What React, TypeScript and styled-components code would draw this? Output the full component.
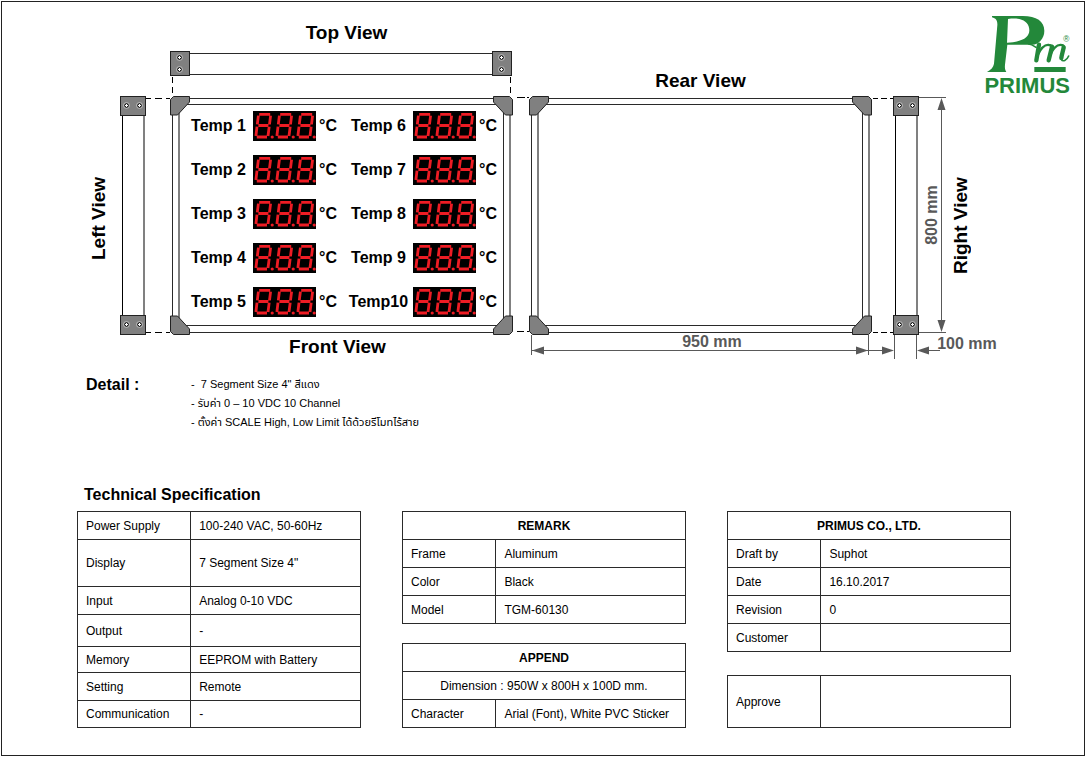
import React from "react";
import styled, { createGlobalStyle } from "styled-components";

const INK = "#000";
const LINE = "#2a2a2a";
const DIM = "#595959";
const METAL = "#808080";
const GREEN = "#23883a";

const GlobalStyle = createGlobalStyle`
  *, *::before, *::after { box-sizing: border-box; }
  body {
    margin: 0;
    background: #fff;
    color: ${INK};
    font-family: "Liberation Sans", "Noto Sans", "Noto Sans Thai", sans-serif;
  }
`;

const Sheet = styled.main`
  margin: 1px;
  border: 1px solid #222;
  padding-bottom: 27px;
`;

/* ---------- Drawing ---------- */

const Drawing = styled.section`
  display: grid;
  grid-template-columns: 26px 58px 343px 16px 343px 76px 30px minmax(94px, 1fr);
  grid-template-rows: 94px 239px 25px;
  padding: 0 14px 0 84px;
`;

const Area = styled.div<{ $col: string; $row: number }>`
  grid-column: ${(p) => p.$col};
  grid-row: ${(p) => p.$row};
  svg { display: block; overflow: visible; }
`;

const TopArea = styled(Area)`
  display: flex;
  flex-direction: column;
  justify-content: flex-end;
`;

const ViewTitle = styled.h2<{ $shift?: number }>`
  margin: 0;
  padding-left: ${(p) => Math.max(p.$shift ?? 0, 0)}px;
  padding-right: ${(p) => Math.max(-(p.$shift ?? 0), 0)}px;
  font-size: 19px;
  line-height: 24px;
  font-weight: 700;
  text-align: center;
`;

const TopTitle = styled(ViewTitle)`
  margin-bottom: 6px;
`;

const RearTitle = styled(ViewTitle)`
  margin-bottom: 3px;
`;

const SideTitle = styled.h2<{ $drop: number }>`
  margin: 0;
  height: 100%;
  padding-bottom: ${(p) => p.$drop}px;
  writing-mode: vertical-rl;
  transform: rotate(180deg);
  font-size: 19px;
  line-height: 26px;
  font-weight: 700;
  text-align: center;
`;

const Panel = styled.div`
  position: relative;
  height: 100%;
`;

const FrameLayer = styled.svg`
  position: absolute;
  inset: 0;
`;

const Readings = styled.ul`
  position: relative;
  display: grid;
  grid-template-columns: 150px 150px;
  grid-template-rows: repeat(5, 30px);
  grid-auto-flow: column;
  gap: 14px 10px;
  margin: 0;
  padding: 15px 0 0 17px;
  list-style: none;
`;

const Reading = styled.li`
  display: grid;
  grid-template-columns: 63px 63px 18px;
  column-gap: 3px;
  align-items: center;
  font-size: 16px;
  line-height: 20px;
  font-weight: 700;
  white-space: nowrap;
`;

const ReadingLabel = styled.span`
  text-align: center;
`;

const Logo = styled(TopArea)`
  align-items: flex-end;
  padding-right: 2px;
  color: ${GREEN};
`;

const LogoName = styled.strong`
  font-size: 22px;
  line-height: 20px;
`;

/* ---------- Detail ---------- */

const Detail = styled.section`
  display: grid;
  grid-template-columns: 105px 1fr;
  padding: 15px 14px 0 84px;
`;

const Heading = styled.h2`
  margin: 0;
  font-size: 16px;
  line-height: 20px;
  font-weight: 700;
`;

const DetailList = styled.ul`
  margin: 0;
  padding: 0;
  list-style: none;
  font-size: 11px;
  line-height: 19px;
`;

/* ---------- Tables ---------- */

const Tables = styled.section`
  display: grid;
  grid-template-columns: repeat(3, 1fr);
  column-gap: 41px;
  align-items: end;
  padding: 51px 73px 0 75px;
`;

const TableColumn = styled.div<{ $gap: number }>`
  display: flex;
  flex-direction: column;
  gap: ${(p) => p.$gap}px;
`;

const SpecHeading = styled(Heading)`
  padding-left: 7px;
  line-height: 24px;
`;

const Table = styled.table<{ $split: string }>`
  width: 100%;
  table-layout: fixed;
  border-collapse: collapse;
  font-size: 12px;
  line-height: 16px;

  col:first-child { width: ${(p) => p.$split}; }
`;

const Row = styled.tr<{ $h?: number }>`
  height: ${(p) => p.$h ?? 28}px;
`;

const Key = styled.th`
  border: 1px solid ${LINE};
  padding: 0 0 0 8px;
  font-weight: 400;
  text-align: left;
`;

const Value = styled.td`
  border: 1px solid ${LINE};
  padding: 0 0 0 8px;
`;

const WideValue = styled(Value)`
  padding: 0;
  text-align: center;
`;

const Caption = styled.th`
  border: 1px solid ${LINE};
  padding: 0;
  font-weight: 700;
  text-align: center;
`;

/* ---------- Drawn parts ---------- */

function Screw({ x, y }: { x: number; y: number }) {
  return (
    <g>
      <circle cx={x} cy={y} r="2.9" fill="#222" stroke="#ddd" strokeWidth="0.9" />
      <path d={`M${x - 1.5} ${y}h3M${x} ${y - 1.5}v3`} stroke="#fff" strokeWidth="1" />
    </g>
  );
}

function Corner({ transform }: { transform?: string }) {
  return (
    <path
      transform={transform}
      d="M3.5 .5H19.5V6L7.5 19H.5V3.5Z"
      fill={METAL}
      stroke="#222"
      strokeWidth="1"
    />
  );
}

function Frame() {
  return (
    <FrameLayer width="343" height="239" viewBox="0 0 343 239" aria-hidden="true">
      <g fill="none" stroke={LINE}>
        <path d="M10 2.5H333M10 8.5H333M10 229.5H333M10 236.5H333" />
        <path d="M2.5 10V229M333.5 10V229" />
      </g>
      <path d="M9 12V227M340 12V227" stroke={METAL} strokeWidth="2" />
      <Corner />
      <Corner transform="translate(343 0) scale(-1 1)" />
      <Corner transform="translate(0 239) scale(1 -1)" />
      <Corner transform="translate(343 239) scale(-1 -1)" />
    </FrameLayer>
  );
}

/* Narrow side profile; x is the left edge of its end caps. */
function Profile({ x }: { x: number }) {
  return (
    <g>
      <path d={`M${x + 2.5} 19V220`} stroke={INK} />
      <path d={`M${x + 24} 19V220`} stroke={METAL} strokeWidth="2" />
      {[0.5, 219.5].map((y) => (
        <g key={y}>
          <rect x={x + 0.5} y={y} width="25" height="19" fill={METAL} stroke="#222" />
          <Screw x={x + 6.5} y={y + 9} />
          <Screw x={x + 19.5} y={y + 9} />
        </g>
      ))}
    </g>
  );
}

function LeftProfile() {
  return (
    <svg width="58" height="239" viewBox="0 0 58 239" aria-hidden="true">
      <path d="M34 2.5H58M34 236.5H58" stroke={INK} strokeDasharray="5 4 7 4" />
      <Profile x={8} />
    </svg>
  );
}

function TopProfile() {
  return (
    <svg width="343" height="45" viewBox="0 0 343 45" aria-hidden="true">
      <path d="M19 2.5H323M19 23.5H323" stroke={LINE} />
      <path d="M2.5 26V45M340.5 26V45" stroke={INK} strokeDasharray="6 4" />
      {[0.5, 322.5].map((x) => (
        <g key={x}>
          <rect x={x} y=".5" width="19" height="24" fill={METAL} stroke="#222" />
          <Screw x={x + 9} y={6.5} />
          <Screw x={x + 9} y={18.5} />
        </g>
      ))}
    </svg>
  );
}

function Joint() {
  return (
    <svg width="16" height="239" viewBox="0 0 16 239" aria-hidden="true">
      <path d="M4 1.5H12M14 1.5H16M4 235.5H11M14 235.5H16" stroke={INK} />
    </svg>
  );
}

const DimText = styled.text`
  fill: ${DIM};
  font-size: 16px;
  font-weight: 700;
  text-anchor: middle;
`;

function RightProfile() {
  return (
    <svg width="76" height="239" viewBox="0 0 76 239" aria-hidden="true">
      <path d="M1 2.5H21M1 236.5H21" stroke={INK} strokeDasharray="5 3 6 3" />
      <Profile x={21} />
      <path d="M47 1.5H74M47 236.5H74M69.5 12V226" stroke={DIM} />
      <path d="M69.5 2L73.5 14H65.5ZM69.5 236L73.5 224H65.5Z" fill={DIM} />
      <DimText transform="translate(65 119) rotate(-90)">800 mm</DimText>
    </svg>
  );
}

function WidthDimensions() {
  return (
    <svg width="471" height="25" viewBox="0 0 471 25" aria-hidden="true">
      <path
        d="M2.5 0V20M339.5 0V20M365.5 0V24M387.5 0V24M3 15.5H339M340 15.5H355M398 15.5H411"
        stroke={DIM}
      />
      <path
        d="M3 15.5L15 11.5V19.5ZM339 15.5L327 11.5V19.5ZM365 15.5L353 11.5V19.5ZM388 15.5L400 11.5V19.5Z"
        fill={DIM}
      />
      <DimText x="183" y="12">950 mm</DimText>
      <DimText x="438" y="14">100 mm</DimText>
    </svg>
  );
}

function Digits() {
  return (
    <svg width="63" height="30" viewBox="0 0 63 30" role="img" aria-label="888">
      <rect width="63" height="30" fill="#000" />
      {[0, 21, 42].map((x) => (
        <g key={x} transform={`translate(${x} 0)`}>
          <path
            d="M6.2 3.4H17.2M5.4 14.5H15.4M3.8 26H14M5.4 4.6L4.3 13.4M17.6 4.6L16.5 13.4M4 15.6L2.9 25M16.2 15.6L15 25"
            stroke="#ee1c24"
            strokeWidth="2.8"
            fill="none"
          />
          <circle cx="19.2" cy="26" r="1.6" fill="#ee1c24" />
        </g>
      ))}
    </svg>
  );
}

function Mark() {
  return (
    <svg width="87" height="60" viewBox="3 18 261 180" aria-hidden="true">
      <path
        fillRule="evenodd"
        fill={GREEN}
        d="M30 18H122C164 18 187 34 187 62C187 74 183 84 175 93C168 101 158 105 148 104H76L69 164C68 174 69 180 73 186H15C27 179 34 172 36 161L46 46C47 32 42 25 30 22ZM78 27C91 25 102 25 112 27C131 31 142 44 142 61C142 82 122 96 75 98Z"
      />
      <g fill="none" stroke={GREEN} strokeLinecap="round" strokeLinejoin="round">
        <path d="M140 102C152 104 158 110 162 112" strokeWidth="5" />
        <path d="M171 104L163 151M210 110L200 151" strokeWidth="13" />
        <path d="M167 136C176 116 188 103 201 105C209 106 211 110 210 118" strokeWidth="7" />
        <path d="M204 136C213 116 225 103 238 105C246 106 247 110 246 116" strokeWidth="7" />
        <path d="M245 112C243 124 239 134 238 144" strokeWidth="13" />
        <path d="M238 148C242 156 254 152 260 138" strokeWidth="5" />
      </g>
      <rect x="157" y="171" width="94" height="15" fill={GREEN} />
      <text x="244" y="96" fill={GREEN} fontSize="25">®</text>
    </svg>
  );
}

/* ---------- Data ---------- */

const sensors = [
  "Temp 1", "Temp 2", "Temp 3", "Temp 4", "Temp 5",
  "Temp 6", "Temp 7", "Temp 8", "Temp 9", "Temp10",
];

const specs: [string, string, number][] = [
  ["Power Supply", "100-240 VAC, 50-60Hz", 28],
  ["Display", '7 Segment Size 4"', 47],
  ["Input", "Analog 0-10 VDC", 28],
  ["Output", "-", 32],
  ["Memory", "EEPROM with Battery", 26],
  ["Setting", "Remote", 28],
  ["Communication", "-", 27],
];

const remarks: [string, string][] = [
  ["Frame", "Aluminum"],
  ["Color", "Black"],
  ["Model", "TGM-60130"],
];

const company: [string, string][] = [
  ["Draft by", "Suphot"],
  ["Date", "16.10.2017"],
  ["Revision", "0"],
  ["Customer", ""],
];

function Cols() {
  return (
    <colgroup>
      <col />
      <col />
    </colgroup>
  );
}

function Pair({ label, value, height }: { label: string; value: string; height?: number }) {
  return (
    <Row $h={height}>
      <Key scope="row">{label}</Key>
      <Value>{value}</Value>
    </Row>
  );
}

export default function App() {
  return (
    <>
      <GlobalStyle />
      <Sheet>
        <Drawing>
          <TopArea $col="3" $row={1}>
            <TopTitle $shift={10}>Top View</TopTitle>
            <TopProfile />
          </TopArea>
          <TopArea $col="5" $row={1}>
            <RearTitle>Rear View</RearTitle>
          </TopArea>
          <Logo $col="8" $row={1}>
            <Mark />
            <LogoName>PRIMUS</LogoName>
          </Logo>

          <Area $col="1" $row={2}>
            <SideTitle $drop={6}>Left View</SideTitle>
          </Area>
          <Area $col="2" $row={2}>
            <LeftProfile />
          </Area>
          <Area $col="3" $row={2}>
            <Panel>
              <Frame />
              <Readings>
                {sensors.map((name) => (
                  <Reading key={name}>
                    <ReadingLabel>{name}</ReadingLabel>
                    <Digits />
                    <span>°C</span>
                  </Reading>
                ))}
              </Readings>
            </Panel>
          </Area>
          <Area $col="4" $row={2}>
            <Joint />
          </Area>
          <Area $col="5" $row={2}>
            <Panel>
              <Frame />
            </Panel>
          </Area>
          <Area $col="6" $row={2}>
            <RightProfile />
          </Area>
          <Area $col="7" $row={2}>
            <SideTitle $drop={20}>Right View</SideTitle>
          </Area>

          <Area $col="3" $row={3}>
            <ViewTitle $shift={-8}>Front View</ViewTitle>
          </Area>
          <Area $col="5 / 9" $row={3}>
            <WidthDimensions />
          </Area>
        </Drawing>

        <Detail>
          <Heading>Detail :</Heading>
          <DetailList>
            <li>-&nbsp; 7 Segment Size 4" สีแดง</li>
            <li>- รับค่า 0 – 10 VDC 10 Channel</li>
            <li>- ตั้งค่า SCALE High, Low Limit ได้ด้วยรีโมทไร้สาย</li>
          </DetailList>
        </Detail>

        <Tables>
          <TableColumn $gap={4}>
            <SpecHeading>Technical Specification</SpecHeading>
            <Table $split="40%">
              <Cols />
              <tbody>
                {specs.map(([label, value, height]) => (
                  <Pair key={label} label={label} value={value} height={height} />
                ))}
              </tbody>
            </Table>
          </TableColumn>

          <TableColumn $gap={19}>
            <Table $split="33%">
              <Cols />
              <thead>
                <Row>
                  <Caption colSpan={2}>REMARK</Caption>
                </Row>
              </thead>
              <tbody>
                {remarks.map(([label, value]) => (
                  <Pair key={label} label={label} value={value} />
                ))}
              </tbody>
            </Table>
            <Table $split="33%">
              <Cols />
              <thead>
                <Row>
                  <Caption colSpan={2}>APPEND</Caption>
                </Row>
              </thead>
              <tbody>
                <Row>
                  <WideValue colSpan={2}>Dimension : 950W x 800H x 100D mm.</WideValue>
                </Row>
                <Pair label="Character" value="Arial (Font), White PVC Sticker" />
              </tbody>
            </Table>
          </TableColumn>

          <TableColumn $gap={23}>
            <Table $split="33%">
              <Cols />
              <thead>
                <Row>
                  <Caption colSpan={2}>PRIMUS CO., LTD.</Caption>
                </Row>
              </thead>
              <tbody>
                {company.map(([label, value]) => (
                  <Pair key={label} label={label} value={value} />
                ))}
              </tbody>
            </Table>
            <Table $split="33%">
              <Cols />
              <tbody>
                <Pair label="Approve" value="" height={52} />
              </tbody>
            </Table>
          </TableColumn>
        </Tables>
      </Sheet>
    </>
  );
}
